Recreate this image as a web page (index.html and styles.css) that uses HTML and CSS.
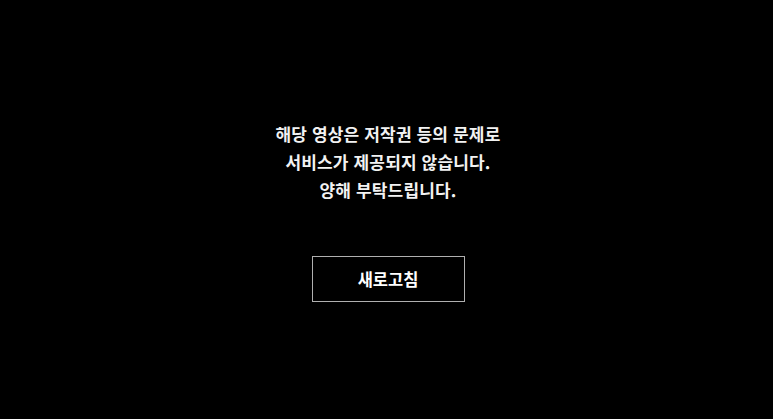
FILE: index.html
```html
<!DOCTYPE html>
<html lang="ko">
<head>
<meta charset="utf-8">
<link rel="stylesheet" href="styles.css">
</head>
<body>
<div class="screen">
  <p class="message">해당 영상은 저작권 등의 문제로<br>서비스가 제공되지 않습니다.<br>양해 부탁드립니다.</p>
  <button class="refresh">새로고침</button>
</div>
</body>
</html>
```

FILE: styles.css
```css
html, body {
  margin: 0;
  padding: 0;
  background: #000;
  height: 100%;
}
.screen {
  height: 100vh;
  box-sizing: border-box;
  padding: 2px 0 0 3px;
  display: flex;
  flex-direction: column;
  align-items: center;
  justify-content: center;
  font-family: "Noto Sans CJK KR", "Noto Sans", sans-serif;
}
.message {
  margin: 0;
  color: #f2f2f2;
  font-size: 17px;
  font-weight: 700;
  line-height: 28px;
  text-align: center;
  letter-spacing: 0.15px;
}
.refresh {
  margin-top: 52px;
  width: 153px;
  height: 46px;
  background: #000;
  border: 1px solid #b0b0b0;
  color: #fff;
  font-family: "Noto Sans CJK KR", sans-serif;
  font-size: 16.5px;
  font-weight: 700;
  padding: 0;
}
```
